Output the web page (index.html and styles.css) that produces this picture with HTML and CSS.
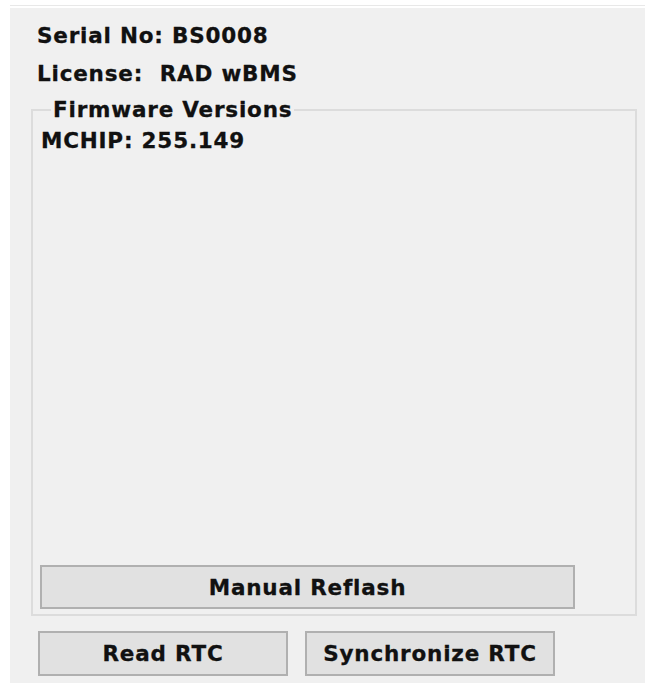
FILE: index.html
```html
<!DOCTYPE html>
<html lang="en">
<head>
<meta charset="utf-8">
<title>Device Info</title>
<link rel="stylesheet" href="styles.css">
</head>
<body>
<div class="frame">
  <div class="rule"></div>
  <div class="panel">
    <div class="info">
      <div class="info-row">Serial No: BS0008</div>
      <div class="info-row">License:  RAD wBMS</div>
    </div>
    <fieldset class="group">
      <legend class="group-title">Firmware Versions</legend>
      <div class="group-body">
        <div class="version">MCHIP: 255.149</div>
        <button class="btn btn-wide" type="button">Manual Reflash</button>
      </div>
    </fieldset>
    <div class="actions">
      <button class="btn btn-half" type="button">Read RTC</button>
      <button class="btn btn-half" type="button">Synchronize RTC</button>
    </div>
  </div>
</div>
</body>
</html>
```

FILE: styles.css
```css
html, body {
  margin: 0;
  padding: 0;
  background: #ffffff;
}

body {
  font-family: "DejaVu Sans", Verdana, sans-serif;
  font-weight: bold;
  font-size: 21.5px;
  letter-spacing: 0.8px;
  color: #111111;
  -webkit-text-stroke: 0.3px #111111;
  width: 645px;
  height: 683px;
  overflow: hidden;
}

.frame {
  padding: 5px 0 0 10px;
}

.rule {
  height: 1px;
  background: #e8e8e8;
  margin-bottom: 2px;
}

.panel {
  background: #f0f0f0;
  height: 675px;
  display: flex;
  flex-direction: column;
}

.info {
  padding: 9px 0 0 27px;
}

.info-row {
  white-space: pre;
  line-height: 38px;
  height: 38px;
}

.info-row + .info-row {
  height: 43px;
}

.group {
  margin: 0 8px 0 21px;
  padding: 0 6px 5px 6px;
  border: 2px solid #dcdcdc;
  min-width: 0;
}

.group-title {
  padding: 0 2px;
  margin-left: 12px;
  line-height: 24px;
}

.group-body {
  height: 487px;
  display: flex;
  flex-direction: column;
}

.version {
  margin: 4px 0 0 2px;
  line-height: 30px;
}

.btn {
  font: inherit;
  letter-spacing: inherit;
  color: inherit;
  background: #e1e1e1;
  border: 2px solid #b0b0b0;
  border-radius: 0;
  padding: 0;
  box-sizing: border-box;
}

.btn-wide {
  margin-top: auto;
  width: 535px;
  height: 44px;
  margin-left: 1px;
}

.actions {
  display: flex;
  gap: 17px;
  padding: 15px 0 0 28px;
}

.btn-half {
  width: 250px;
  height: 45px;
}
```
